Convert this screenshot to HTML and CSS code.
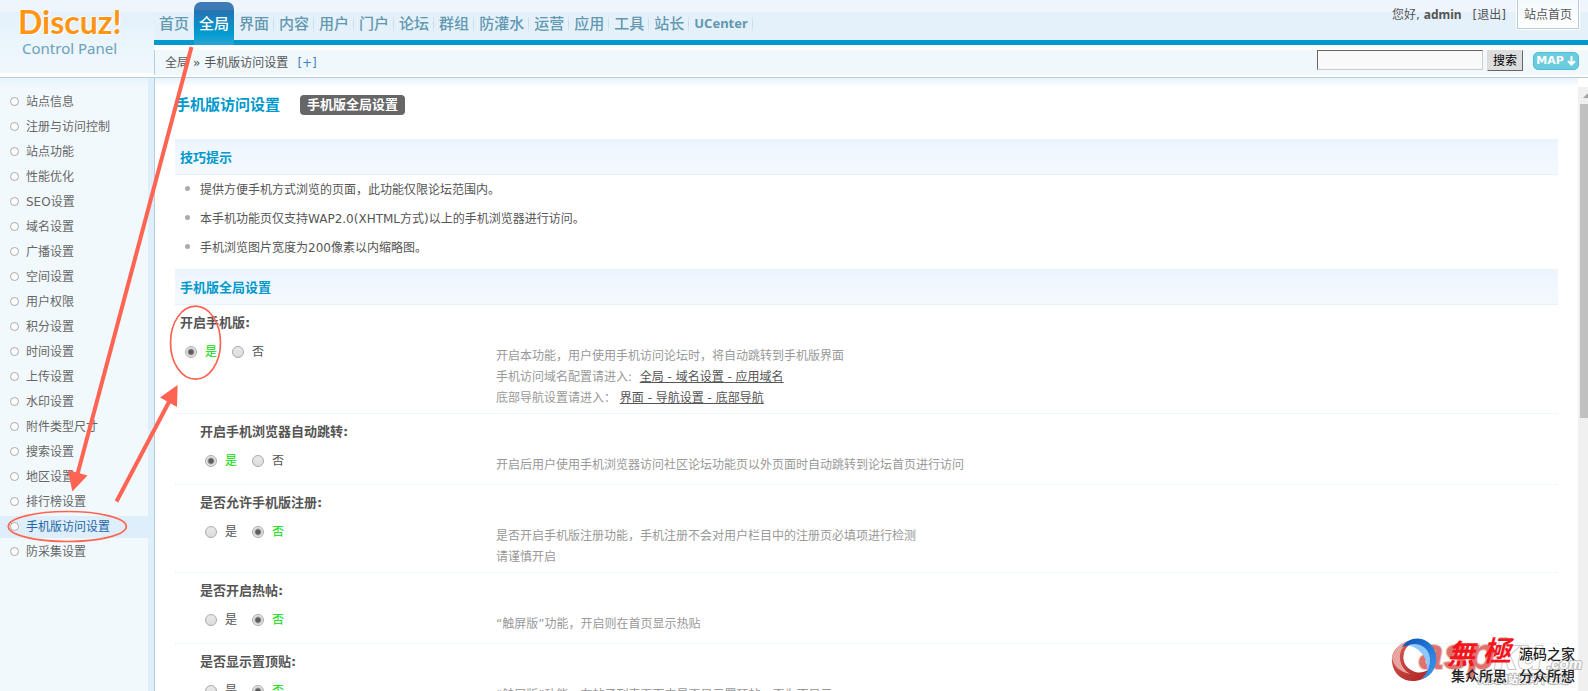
FILE: index.html
```html
<!DOCTYPE html>
<html lang="zh-CN">
<head>
<meta charset="utf-8">
<title>Discuz! Control Panel</title>
<link rel="stylesheet" href="styles.css">
</head>
<body>
<div class="page">
  <header class="header">
    <div class="brand">
      <div class="brand-name">Discuz!</div>
      <div class="brand-sub">Control Panel</div>
    </div>
    <div class="header-main">
      <div class="topbar">
        <nav class="nav">
          <a href="#">首页</a><a href="#" class="active">全局</a><a href="#">界面</a><a href="#">内容</a><a href="#">用户</a><a href="#">门户</a><a href="#">论坛</a><a href="#">群组</a><a href="#">防灌水</a><a href="#">运营</a><a href="#">应用</a><a href="#">工具</a><a href="#">站长</a><a href="#" class="latin">UCenter</a>
        </nav>
        <div class="user">
          <span>您好, <strong>admin</strong></span>
          <a href="#">[退出]</a>
          <a href="#" class="site-home">站点首页</a>
        </div>
      </div>
      <div class="subbar">
        <div class="crumbs">全局<span class="raquo">»</span>手机版访问设置<a href="#">[+]</a></div>
        <form class="search">
          <input type="text" class="search-input" aria-label="搜索">
          <button type="button" class="search-btn">搜索</button>
          <button type="button" class="map-btn">MAP<svg width="9" height="10" viewBox="0 0 9 10" aria-hidden="true"><path d="M4.500 0v8M1 5l3.500 3.500L8 5" fill="none" stroke="#fff" stroke-width="2"/></svg></button>
        </form>
      </div>
    </div>
  </header>

  <div class="body">
    <aside class="sidebar">
      <ul class="menu">
        <li><a href="#">站点信息</a></li>
        <li><a href="#">注册与访问控制</a></li>
        <li><a href="#">站点功能</a></li>
        <li><a href="#">性能优化</a></li>
        <li><a href="#">SEO设置</a></li>
        <li><a href="#">域名设置</a></li>
        <li><a href="#">广播设置</a></li>
        <li><a href="#">空间设置</a></li>
        <li><a href="#">用户权限</a></li>
        <li><a href="#">积分设置</a></li>
        <li><a href="#">时间设置</a></li>
        <li><a href="#">上传设置</a></li>
        <li><a href="#">水印设置</a></li>
        <li><a href="#">附件类型尺寸</a></li>
        <li><a href="#">搜索设置</a></li>
        <li><a href="#">地区设置</a></li>
        <li><a href="#">排行榜设置</a></li>
        <li><a href="#" class="current">手机版访问设置</a></li>
        <li><a href="#">防采集设置</a></li>
      </ul>
    </aside>

    <main class="content">
      <div class="title-row">
        <h1>手机版访问设置</h1>
        <a href="#" class="tab">手机版全局设置</a>
      </div>

      <h2 class="section">技巧提示</h2>
      <ul class="tips">
        <li>提供方便手机方式浏览的页面，此功能仅限论坛范围内。</li>
        <li>本手机功能页仅支持WAP2.0(XHTML方式)以上的手机浏览器进行访问。</li>
        <li>手机浏览图片宽度为200像素以内缩略图。</li>
      </ul>

      <h2 class="section">手机版全局设置</h2>
      <form>
        <div class="setting" role="radiogroup" aria-labelledby="s1">
          <h3 id="s1">开启手机版:</h3>
          <div class="options">
            <label><input type="radio" name="mobile" checked><span>是</span></label>
            <label><input type="radio" name="mobile"><span>否</span></label>
          </div>
          <p class="desc">开启本功能，用户使用手机访问论坛时，将自动跳转到手机版界面<br>手机访问域名配置请进入: &nbsp;<a href="#">全局 - 域名设置 - 应用域名</a><br>底部导航设置请进入： <a href="#">界面 - 导航设置 - 底部导航</a></p>
        </div>
        <div class="setting sub" role="radiogroup" aria-labelledby="s2">
          <h3 id="s2">开启手机浏览器自动跳转:</h3>
          <div class="options">
            <label><input type="radio" name="jump" checked><span>是</span></label>
            <label><input type="radio" name="jump"><span>否</span></label>
          </div>
          <p class="desc">开启后用户使用手机浏览器访问社区论坛功能页以外页面时自动跳转到论坛首页进行访问</p>
        </div>
        <div class="setting sub" role="radiogroup" aria-labelledby="s3">
          <h3 id="s3">是否允许手机版注册:</h3>
          <div class="options">
            <label><input type="radio" name="register"><span>是</span></label>
            <label><input type="radio" name="register" checked><span>否</span></label>
          </div>
          <p class="desc">是否开启手机版注册功能，手机注册不会对用户栏目中的注册页必填项进行检测<br>请谨慎开启</p>
        </div>
        <div class="setting sub" role="radiogroup" aria-labelledby="s4">
          <h3 id="s4">是否开启热帖:</h3>
          <div class="options">
            <label><input type="radio" name="hot"><span>是</span></label>
            <label><input type="radio" name="hot" checked><span>否</span></label>
          </div>
          <p class="desc">“触屏版”功能，开启则在首页显示热贴</p>
        </div>
        <div class="setting sub" role="radiogroup" aria-labelledby="s5">
          <h3 id="s5">是否显示置顶贴:</h3>
          <div class="options">
            <label><input type="radio" name="sticky"><span>是</span></label>
            <label><input type="radio" name="sticky" checked><span>否</span></label>
          </div>
          <p class="desc">“触屏版”功能，在帖子列表页面中是否显示置顶帖，否为不显示</p>
        </div>
      </form>
    </main>

    <div class="scrollbar" aria-hidden="true">
      <svg width="10" height="17" viewBox="0 0 10 17"><path d="M5 11L9.500 6.500L14 11z" fill="#a3a3a3"/></svg>
      <div class="thumb"></div>
    </div>
  </div>

  <svg class="marks" width="260" height="560" viewBox="0 0 260 560" aria-hidden="true">
    <g fill="none" stroke="#ff6352">
      <path d="M191.500 47L77.500 474" stroke-width="4"/>
      <path d="M116.500 501.500L170 400" stroke-width="4"/>
      <ellipse cx="195.500" cy="342.700" rx="25" ry="36.500" stroke-width="1.700"/>
      <ellipse cx="67.300" cy="526.500" rx="59" ry="15" stroke-width="1.700"/>
    </g>
    <path d="M72.300 491.500L68 470L87.500 475.500zM177.600 385L160 397.500L177 407z" fill="#ff6352"/>
  </svg>

  <svg class="watermark" width="196" height="56" viewBox="0 0 196 56" aria-hidden="true">
    <defs>
      <linearGradient id="red" x1="0" y1="0" x2="1" y2="1"><stop offset="0" stop-color="#d9605a"/><stop offset="1" stop-color="#a81c1c"/></linearGradient>
      <linearGradient id="blue" x1="0" y1="0" x2="1" y2="1"><stop offset="0" stop-color="#0a4fb8"/><stop offset="1" stop-color="#3f9bf0"/></linearGradient>
    </defs>
    <g class="wm-back">
      <text x="29" y="36" class="wm-asp">asp</text>
      <text x="104" y="36" class="wm-ku">ku</text>
      <text x="157" y="36" class="wm-com">.com</text>
      <text x="88" y="50" class="wm-line">免费网站源码下载站!</text>
    </g>
    <path d="M14 11C6 13 1 20 2 29C3 41 13 49 25 48C36 47 44 39 45 29C40 38 31 42 23 38C15 34 12 28 14 20C15 15 20 10 26 8C21 8 17 9 14 11z" fill="url(#red)"/>
    <path d="M2 24C6 12 16 6 25 8C14 10 9 17 10 26C11 33 15 38 20 41C10 39 3 33 2 24z" fill="#e8a5a0"/>
    <path d="M12 14C18 5 29 3 38 9C46 15 49 26 44 36C41 42 36 45 31 46C38 40 41 32 38 24C35 15 24 9 12 14z" fill="url(#blue)"/>
    <path d="M19 12C27 9 36 13 39 21C41 27 40 33 37 38C38 29 35 18 19 12z" fill="#8cc8ff"/>
    <text x="57" y="31" class="wm-red">無</text>
    <text x="93" y="28" class="wm-red">極</text>
    <text x="129" y="26" class="wm-main">源码之家</text>
    <text x="61" y="48" class="wm-main">集众所思</text>
    <text x="129" y="48" class="wm-main">分众所想</text>
  </svg>
</div>
</body>
</html>
```
FILE: styles.css
```css
* {
  box-sizing: border-box;
}

body {
  margin: 0;
  font: 12px/20px "DejaVu Sans", "Noto Sans CJK SC", sans-serif;
  color: #555;
  background: #fff;
}

h1, h2, h3, ul, p {
  margin: 0;
  padding: 0;
}

ul {
  list-style: none;
}

a {
  color: inherit;
  text-decoration: none;
}

.page {
  position: relative;
  display: flex;
  flex-direction: column;
  height: 100vh;
  overflow: hidden;
}

/* Header */
.header {
  display: grid;
  grid-template-columns: 154px 1fr;
  flex: none;
  border-bottom: 1px solid #b5cfd9;
}

.brand {
  padding: 3px 0 0 18px;
  border-bottom: 4px solid #fff;
  background: linear-gradient(#eef5fd 12px, #e4f1fb 12px, #f0f8fc);
}

.brand-name {
  font: bold 32px/37px Lato, sans-serif;
  color: #ff9415;
  text-shadow: 1px 1px 0 #fff, -1px -1px 0 #fff;
}

.brand-sub {
  padding-left: 4px;
  font: 15px/16px "Noto Sans", sans-serif;
  color: #6ba1b6;
}

.topbar {
  display: flex;
  justify-content: space-between;
  height: 45px;
  border-bottom: 5px solid #0099cf;
  background: linear-gradient(#eef5fd 12px, #e4f1fb 12px);
}

.nav {
  display: flex;
  height: 43px;
  margin-top: 2px;
}

.nav a {
  padding: 0 5px;
  font-size: 15px;
  font-weight: 500;
  line-height: 45px;
  color: #6298b0;
  background: linear-gradient(transparent, #c5dbe7, transparent) right 12px / 1px 20px no-repeat;
}

.nav .active {
  color: #fff;
  border-radius: 7px 7px 0 0;
  background: linear-gradient(#3d7ab6 8px, #2673b1 8px, #0099cf 30px, #2aa5d5);
}

.nav .latin {
  font: bold 13px/43px "Noto Sans", sans-serif;
}

.user {
  display: flex;
  gap: 11px;
  padding-right: 9px;
  line-height: 30px;
}

.user strong {
  font-family: "Noto Sans", sans-serif;
}

.site-home {
  height: 29px;
  padding: 0 6px;
  border: solid #b5cfd9;
  border-width: 0 1px 1px;
  background: linear-gradient(#f3f9fc, #fff);
  box-shadow: 0 0 0 1px #fff;
}

.subbar {
  display: flex;
  justify-content: space-between;
  height: 32px;
  padding: 0 9px 0 11px;
  border: solid #fff;
  border-width: 5px 0 2px;
  background: #f0f8fc;
  box-shadow: inset 1px 0 0 #b5cfd9;
}

.crumbs {
  line-height: 27px;
}

.raquo {
  margin: 0 4px;
}

.crumbs a {
  margin-left: 9px;
  color: #3b82c4;
}

.search {
  display: flex;
  align-items: flex-start;
  gap: 4px;
}

.search-input {
  width: 166px;
  height: 20px;
  border: 1px solid;
  border-color: #666 #ccc #ccc #666;
  background: #f9f9f9;
}

.search-btn {
  height: 21px;
  padding: 0 5px;
  border: 1px solid;
  border-color: #ddd #666 #666 #ddd;
  background: #ddd;
  color: #000;
  font: inherit;
}

.map-btn {
  display: flex;
  align-items: center;
  justify-content: center;
  gap: 3px;
  width: 46px;
  height: 18px;
  margin: 2px 0 0 6px;
  padding: 0;
  border: 1px solid #4dbfd9;
  border-radius: 5px;
  background: #6ccbdc;
  color: #fff;
  font: bold 11px/16px "DejaVu Sans", sans-serif;
}

/* Body */
.body {
  display: flex;
  flex: 1;
  min-height: 0;
}

.sidebar {
  flex: none;
  width: 155px;
  padding-top: 13px;
  border-right: 1px solid #b5cfd9;
  background: linear-gradient(90deg, transparent 148px, #deeefa 148px), linear-gradient(#e8f3fc, #f2f9fd 12px);
}

.menu {
  width: 148px;
}

.menu a {
  display: flex;
  align-items: center;
  height: 22px;
  margin-bottom: 3px;
  padding-left: 10px;
  color: #666;
  line-height: 24px;
}

.menu a::before {
  content: "";
  width: 7px;
  height: 7px;
  margin: 0 7px 2px 0;
  border: 1px solid #aaa;
  border-radius: 50%;
  background: #fff;
}

.menu .current {
  background: #deeefa;
  color: #2366a8;
}

.menu a::before {
  flex: none;
}

.content {
  flex: 1;
  min-width: 0;
  padding: 16px 20px 0;
  overflow: hidden;
  background: linear-gradient(#e8f3fc, #fff 9px);
}

.title-row {
  display: flex;
  align-items: center;
  gap: 20px;
  height: 22px;
  margin-bottom: 23px;
}

h1 {
  font-size: 15px;
  color: #09c;
}

.tab {
  padding: 0 7px;
  border-radius: 4px;
  background: #666;
  color: #fff;
  font-size: 13px;
  font-weight: bold;
}

.section {
  height: 36px;
  padding-left: 5px;
  border-bottom: 1px dotted #deeefb;
  background: linear-gradient(#ebf4fb, #f0f6ff 30%, #f3f9fd);
  color: #09c;
  font-size: 13px;
  line-height: 37px;
}

.tips {
  padding-bottom: 7px;
}

.tips li {
  display: flex;
  align-items: center;
  height: 29px;
  padding-left: 10px;
}

.tips li::before {
  content: "";
  width: 5px;
  height: 5px;
  margin: 0 10px 2px 0;
  border-radius: 50%;
  background: #aaa;
}

.setting {
  display: grid;
  grid-template-columns: 321px 1fr;
  grid-template-rows: 20px auto;
  align-content: start;
  align-items: start;
  min-height: 71px;
  padding: 8px 0 4px;
  border-bottom: 1px dotted #deeefb;
}

.setting h3 {
  grid-column: 1 / -1;
  padding-left: 5px;
  font-size: 13px;
  line-height: 20px;
}

.options {
  display: flex;
  gap: 15px;
  padding: 9px 0 0 10px;
}

.sub h3 {
  padding-left: 25px;
}

.sub .options {
  padding-left: 30px;
}

.options label {
  display: flex;
  align-items: center;
  gap: 8px;
}

.options input {
  appearance: none;
  width: 12px;
  height: 12px;
  margin: 0;
  border: 1px solid #aaa;
  border-radius: 50%;
  background: linear-gradient(#e9e9e9, #dcdcdc);
}

.options input:checked {
  background: radial-gradient(circle, #5c5c5c 2px, #e6e6e6 4px);
}

.options input:checked + span {
  color: #0d0;
}

.desc {
  padding-top: 13px;
  color: #999;
  line-height: 21px;
}

.desc a {
  color: #555;
  text-decoration: underline;
}

.scrollbar {
  flex: none;
  width: 10px;
  margin-top: 9px;
  background: #f0f0f0;
}

.scrollbar svg {
  display: block;
}

.thumb {
  height: 52%;
  margin-left: 2px;
  background: #c0c0c0;
}

/* Annotations and watermark lie over the page */
.marks {
  position: absolute;
  top: 0;
  left: 0;
  pointer-events: none;
}

.watermark {
  position: absolute;
  right: 2px;
  bottom: 2px;
  pointer-events: none;
  font-family: "Noto Sans CJK SC", sans-serif;
}

.wm-back {
  font-style: italic;
  font-weight: bold;
  paint-order: stroke;
  stroke-width: 2px;
  opacity: 0.8;
}

.wm-asp {
  font-family: "Liberation Sans", sans-serif;
  font-size: 44px;
  fill: #d8504a;
  stroke: #e9b5b0;
}

.wm-ku {
  font-family: "Liberation Sans", sans-serif;
  font-size: 42px;
  fill: #fff;
  stroke: #bbb;
}

.wm-com {
  font-family: "Liberation Sans", sans-serif;
  font-size: 15px;
  fill: #fff;
  stroke: #aaa;
}

.wm-line {
  font-size: 10px;
  font-style: normal;
  fill: #fff;
  stroke: #aaa;
}

.wm-red {
  font-size: 28px;
  font-style: italic;
  font-weight: bold;
  fill: #f5151c;
}

.wm-main {
  font-size: 14px;
  font-weight: 500;
  fill: #222;
}
```
